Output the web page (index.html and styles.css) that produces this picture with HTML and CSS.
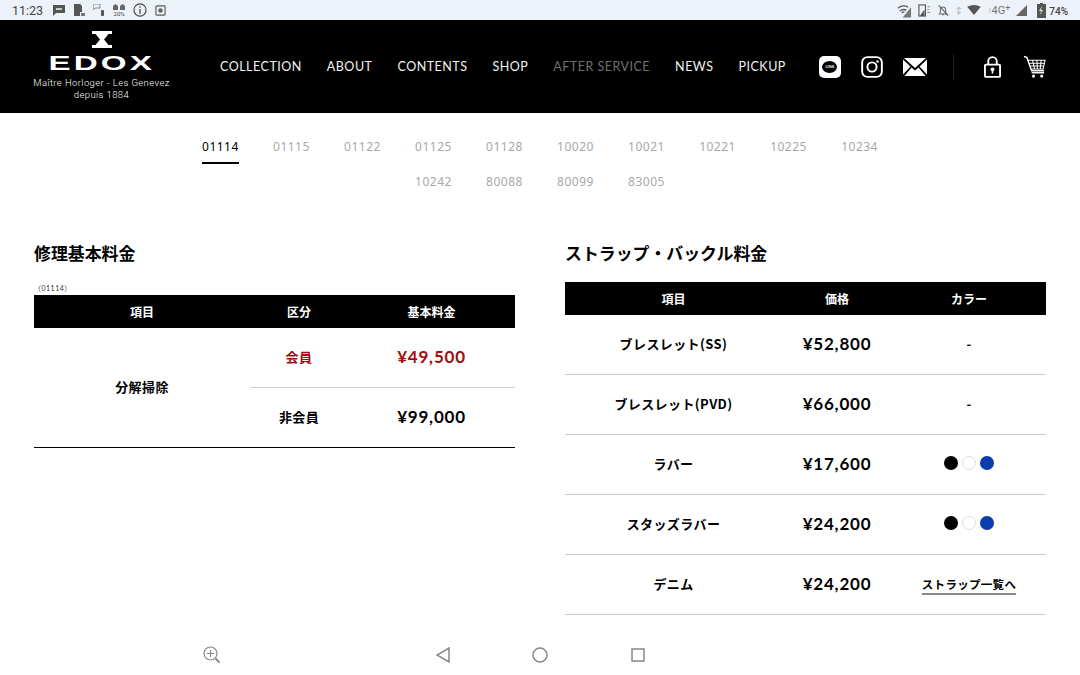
FILE: index.html
```html
<!DOCTYPE html>
<html lang="ja">
<head>
    <meta charset="UTF-8">
    <meta name="viewport" content="width=device-width, initial-scale=1.0">
    <title>EDOX - アフターサービス</title>
    <link rel="stylesheet" href="styles.css">
</head>
<body>

<!-- Android status bar -->
<div class="status-bar">
    <div class="status-left">
        <span class="clock">11:23</span>
        <svg width="12" height="12" viewBox="0 0 12 12"><path d="M0 1h12v8H3l-3 3z" fill="#555"/><rect x="3" y="4" width="6" height="2" fill="#ccc"/></svg>
        <svg width="12" height="13" viewBox="0 0 12 13"><path d="M1 0h6l2 2v6H7v4H1z" fill="#555"/><rect x="8" y="9" width="4" height="3" fill="#777"/></svg>
        <svg width="12" height="12" viewBox="0 0 12 12"><path d="M0 0h7v4H2L0 6z" fill="none" stroke="#888"/><rect x="8" y="6" width="3" height="6" rx="1" fill="#555"/></svg>
        <span class="st-data">
            <svg width="12" height="6" viewBox="0 0 12 6"><path d="M0 6V2l2.500-2L5 2v4zM7 6V2l2.500-2L12 2v4z" fill="#666"/></svg>
            <span>20%</span>
        </span>
        <svg width="14" height="14" viewBox="0 0 15 15"><circle cx="7.500" cy="7.500" r="6.500" fill="none" stroke="#444" stroke-width="1.200"/><rect x="6.800" y="6.500" width="1.400" height="5" fill="#444"/><rect x="6.800" y="3.600" width="1.400" height="1.500" fill="#444"/></svg>
        <svg width="11" height="11" viewBox="0 0 12 12"><rect x="1" y="1" width="10" height="10" rx="1" fill="none" stroke="#555" stroke-width="1.200"/><circle cx="6" cy="6" r="2.500" fill="#666"/></svg>
    </div>
    <div class="status-right">
        <svg width="15" height="15" viewBox="0 0 16 15"><path d="M1 5a10 10 0 0 1 11-1M3 8a7 7 0 0 1 7-1M5 10a4 4 0 0 1 3-1" fill="none" stroke="#555" stroke-width="1.400"/><path d="M15 4v11H6z" fill="#777"/></svg>
        <svg width="13" height="13" viewBox="0 0 14 14"><rect x="1" y="1" width="7" height="12" fill="none" stroke="#555" stroke-width="1.200"/><path d="M7 1v5L2 13h5z" fill="#555"/><path d="M10 3h3M10 6h2M10 9h3" stroke="#888"/></svg>
        <svg width="12" height="13" viewBox="0 0 14 14"><path d="M3 11c1-1 1-3 1-5a3 3 0 0 1 6 0c0 2 0 4 1 5z M6 12h2" fill="none" stroke="#666" stroke-width="1.200"/><path d="M2 1l11 12" stroke="#555" stroke-width="1.200"/></svg>
        <span class="st-arrows">↕</span>
        <svg width="14" height="10" viewBox="0 0 15 11"><path d="M0 2Q7.500-2 15 2L7.500 11z" fill="#555"/></svg>
        <span class="st-net"><span class="st-arrows">↕</span>4G<sup>+</sup></span>
        <svg width="11" height="11" viewBox="0 0 11 11"><path d="M11 0v11H0z" fill="#666"/></svg>
        <span class="st-battery">
            <svg width="9" height="15" viewBox="0 0 9 15"><path d="M3 0h3v1h3v14H0V1h3z" fill="#555"/><path d="M5 3L2 8h2l-1 4 3-5H4z" fill="#ddd"/></svg>
            <b>74%</b>
        </span>
    </div>
</div>

<!-- Header -->
<header class="site-header">
    <a class="logo" href="#">
        <svg class="logo-mark" width="20" height="17" viewBox="0 0 20 17"><path d="M0 0h20v3h-3.500L12 8.500 16.500 14H20v3H0v-3h3.500L8 8.500 3.500 3H0z" fill="#fff"/></svg>
        <span class="logo-name">EDOX</span>
        <span class="logo-sub">Maître Horloger - Les Genevez</span>
        <span class="logo-sub">depuis 1884</span>
    </a>
    <nav class="main-nav">
        <a href="#">COLLECTION</a>
        <a href="#">ABOUT</a>
        <a href="#">CONTENTS</a>
        <a href="#">SHOP</a>
        <a href="#" class="current">AFTER SERVICE</a>
        <a href="#">NEWS</a>
        <a href="#">PICKUP</a>
    </nav>
    <div class="sns-icons">
        <a href="#" class="line-icon"><span class="line-bubble">LINE</span></a>
        <a href="#"><svg width="22" height="22" viewBox="0 0 23 23"><rect x="1.200" y="1.200" width="20.600" height="20.600" rx="5.500" fill="none" stroke="#fff" stroke-width="2"/><circle cx="11.500" cy="11.500" r="4.800" fill="none" stroke="#fff" stroke-width="2"/><circle cx="17.300" cy="5.700" r="1.300" fill="#fff"/></svg></a>
        <a href="#"><svg width="24" height="18" viewBox="0 0 24 18"><path d="M0 1.500v15L7.500 8.500zM24 1.500v15L16.500 8.500z" fill="#fff"/><path d="M1 0h22L12 10zM1.500 18l7-8.500 3.500 3 3.500-3 7 8.500z" fill="#fff"/></svg></a>
    </div>
    <div class="user-icons">
        <a href="#"><svg width="17" height="22" viewBox="0 0 18 23"><path d="M4.500 9V5.500a4.500 4.500 0 0 1 9 0V9" fill="none" stroke="#fff" stroke-width="2"/><rect x="1" y="9" width="16" height="13" rx="1" fill="none" stroke="#fff" stroke-width="2"/><circle cx="9" cy="14" r="2" fill="#fff"/><rect x="8.200" y="14" width="1.600" height="4.500" fill="#fff"/></svg></a>
        <a href="#"><svg width="23" height="24" viewBox="0 0 24 24"><path d="M1 1l3 1 5 14h13" fill="none" stroke="#fff" stroke-width="1.500"/><path d="M5.500 5H23l-2 9H9M6.500 8h16M8 11h14M10 5l2 9M14.500 5l.5 9M19 5l-1 9" fill="none" stroke="#fff" stroke-width="1.100"/><path d="M9 18h13" stroke="#fff" stroke-width="1.500"/><circle cx="11" cy="21.500" r="1.600" fill="#fff"/><circle cx="19.500" cy="21.500" r="1.600" fill="#fff"/></svg></a>
    </div>
</header>

<main class="content">
    <div class="model-tabs">
        <a href="#" class="active">01114</a>
        <a href="#">01115</a>
        <a href="#">01122</a>
        <a href="#">01125</a>
        <a href="#">01128</a>
        <a href="#">10020</a>
        <a href="#">10021</a>
        <a href="#">10221</a>
        <a href="#">10225</a>
        <a href="#">10234</a>
        <a href="#">10242</a>
        <a href="#">80088</a>
        <a href="#">80099</a>
        <a href="#">83005</a>
    </div>

    <div class="price-columns">
        <!-- 修理基本料金 -->
        <section class="price-col">
            <h2>修理基本料金</h2>
            <p class="model-note">（01114）</p>
            <table class="price-table basic">
                <thead>
                    <tr><th>項目</th><th>区分</th><th>基本料金</th></tr>
                </thead>
                <tbody>
                    <tr class="member">
                        <td rowspan="2" class="item-name">分解掃除</td>
                        <td class="kubun">会員</td>
                        <td class="price">¥49,500</td>
                    </tr>
                    <tr>
                        <td class="kubun">非会員</td>
                        <td class="price">¥99,000</td>
                    </tr>
                </tbody>
            </table>
        </section>

        <!-- ストラップ・バックル料金 -->
        <section class="price-col">
            <h2>ストラップ・バックル料金</h2>
            <table class="price-table strap">
                <thead>
                    <tr><th>項目</th><th>価格</th><th>カラー</th></tr>
                </thead>
                <tbody>
                    <tr><td class="item-name">ブレスレット(SS)</td><td class="price">¥52,800</td><td>-</td></tr>
                    <tr><td class="item-name">ブレスレット(PVD)</td><td class="price">¥66,000</td><td>-</td></tr>
                    <tr>
                        <td class="item-name">ラバー</td>
                        <td class="price">¥17,600</td>
                        <td><div class="colors"><i class="dot black"></i><i class="dot white"></i><i class="dot blue"></i></div></td>
                    </tr>
                    <tr>
                        <td class="item-name">スタッズラバー</td>
                        <td class="price">¥24,200</td>
                        <td><div class="colors"><i class="dot black"></i><i class="dot white"></i><i class="dot blue"></i></div></td>
                    </tr>
                    <tr>
                        <td class="item-name">デニム</td>
                        <td class="price">¥24,200</td>
                        <td><a href="#" class="strap-link">ストラップ一覧へ</a></td>
                    </tr>
                </tbody>
            </table>
        </section>
    </div>
</main>

<!-- Android navigation bar -->
<div class="nav-bar">
    <svg class="zoom-icon" width="18" height="18" viewBox="0 0 18 18"><circle cx="7.500" cy="7.500" r="6.500" fill="none" stroke="#888" stroke-width="1.200"/><path d="M7.500 4v7M4 7.500h7" stroke="#888" stroke-width="1"/><path d="M12.500 12.500l4 4" stroke="#888" stroke-width="2"/></svg>
    <div class="nav-buttons">
        <svg width="14" height="16" viewBox="0 0 14 16"><path d="M13 1v14L1 8z" fill="none" stroke="#888" stroke-width="1.500"/></svg>
        <svg width="16" height="16" viewBox="0 0 16 16"><circle cx="8" cy="8" r="7" fill="none" stroke="#888" stroke-width="1.500"/></svg>
        <svg class="nav-square" width="14" height="14" viewBox="0 0 14 14"><rect x="1" y="1" width="12" height="12" fill="none" stroke="#888" stroke-width="1.500"/></svg>
    </div>
</div>

</body>
</html>
```

FILE: styles.css
```css
* {
    margin: 0;
    padding: 0;
    box-sizing: border-box;
}

body {
    font-family: 'Lato', 'Noto Sans CJK JP', sans-serif;
    width: 1080px;
    height: 675px;
    background: #fff;
    color: #000;
    display: flex;
    flex-direction: column;
    overflow: hidden;
}

a {
    color: inherit;
    text-decoration: none;
}

/* status bar */
.status-bar {
    height: 20px;
    flex: none;
    background: #edf2fa;
    display: flex;
    justify-content: space-between;
    align-items: center;
    padding: 0 12px;
    color: #444;
}

.status-left, .status-right {
    display: flex;
    align-items: center;
}

.clock {
    font-family: 'Roboto', sans-serif;
    font-size: 12.500px;
    margin-right: 2px;
}

.status-left {
    gap: 8px;
}

.status-right {
    gap: 6px;
}

.st-data {
    display: flex;
    flex-direction: column;
    align-items: center;
    font-size: 6px;
    line-height: 7px;
    font-family: 'Roboto', sans-serif;
}

.st-arrows {
    font-size: 8px;
    color: #aaa;
}

.st-net {
    font-family: 'Roboto', sans-serif;
    font-size: 11px;
    color: #777;
    display: flex;
    align-items: center;
}

.st-net sup {
    font-size: 9px;
    line-height: 9px;
    align-self: flex-start;
}

.st-battery {
    display: flex;
    align-items: center;
    gap: 3px;
    margin-left: 4px;
}

.st-battery b {
    font-family: 'Roboto', sans-serif;
    font-size: 10px;
    font-weight: 500;
    margin-top: 2px;
}

/* header */
.site-header {
    height: 93px;
    flex: none;
    background: #000;
    color: #fff;
    display: flex;
    align-items: center;
    padding: 0 34px 0 33px;
    white-space: nowrap;
}

.logo {
    width: 137px;
    flex: none;
    display: flex;
    flex-direction: column;
    align-items: center;
    margin-right: 50px;
    padding-bottom: 2px;
}

.logo-mark {
    margin-bottom: 5px;
}

.logo-name {
    font-family: 'Liberation Sans', sans-serif;
    font-weight: 700;
    font-size: 21px;
    line-height: 19px;
    letter-spacing: 2px;
    transform: scaleX(1.58);
    margin-bottom: 5px;
}

.logo-sub {
    font-family: 'Roboto', sans-serif;
    font-size: 9.500px;
    font-weight: 300;
    line-height: 12px;
    letter-spacing: 0.4px;
    color: #fff;
}

.main-nav {
    display: flex;
    gap: 25px;
    font-size: 12.500px;
    letter-spacing: 0.5px;
    margin-right: 33px;
    color: #f2f2f2;
}

.main-nav .current {
    color: #707070;
}

.sns-icons {
    display: flex;
    align-items: center;
    gap: 20px;
    padding-right: 26px;
    border-right: 1px solid #222;
    height: 26px;
}

.sns-icons a {
    display: flex;
}

.line-icon {
    width: 22px;
    height: 22px;
    background: #fff;
    border-radius: 5px;
    align-items: center;
    justify-content: center;
}

.line-bubble {
    background: #000;
    color: #fff;
    width: 15px;
    height: 12px;
    border-radius: 50%;
    font-size: 4px;
    font-weight: 700;
    line-height: 12px;
    text-align: center;
}

.user-icons {
    display: flex;
    align-items: center;
    gap: 22px;
    margin-left: 30px;
}

.user-icons a {
    display: flex;
}

/* tabs */
.content {
    flex: 1;
    min-height: 0;
    padding: 0 34px;
}

.model-tabs {
    width: 720px;
    margin: 16px auto 0;
    display: flex;
    flex-wrap: wrap;
    justify-content: center;
    column-gap: 34.200px;
    font-family: 'Noto Sans', sans-serif;
    font-size: 12px;
    letter-spacing: 0.5px;
    color: #a8a8a8;
}

.model-tabs a {
    height: 35px;
    line-height: 35px;
}

.model-tabs .active {
    color: #000;
    border-bottom: 2px solid #000;
}

/* tables */
.price-columns {
    display: grid;
    grid-template-columns: 481px 481px;
    column-gap: 50px;
    margin-top: 43px;
}

h2 {
    font-size: 16.900px;
    font-weight: 700;
    line-height: 24px;
    margin-bottom: 16px;
}

.model-note {
    font-size: 7px;
    line-height: 13px;
    letter-spacing: 0.5px;
    color: #333;
}

.price-table {
    width: 100%;
    border-collapse: separate;
    border-spacing: 0;
    table-layout: fixed;
    text-align: center;
}

.price-table th {
    background: #000;
    color: #fff;
    height: 33px;
    font-size: 12px;
    font-weight: 700;
}

.price-table td {
    height: 60px;
    padding-bottom: 2px;
    font-family: 'Noto Sans CJK JP', sans-serif;
    font-size: 13px;
    font-weight: 700;
    letter-spacing: 0.4px;
    border-bottom: 1px solid #ccc;
}

.price-table .price {
    font-family: 'Lato', sans-serif;
    font-size: 17px;
    letter-spacing: 0.8px;
}

.basic th:nth-child(1) {
    width: 216px;
}

.basic th:nth-child(2) {
    width: 98px;
}

.basic .item-name {
    border-bottom: 1px solid #000;
}

.basic tr:last-child td {
    border-bottom: 1px solid #000;
}

.member td:not(.item-name) {
    color: #a00d10;
}

.strap th:nth-child(1) {
    width: 217px;
}

.strap th:nth-child(2) {
    width: 110px;
}

.colors {
    display: flex;
    justify-content: center;
    gap: 4px;
    margin-top: -2px;
}

.dot {
    width: 14px;
    height: 14px;
    border-radius: 50%;
}

.dot.black {
    background: #000;
}

.dot.white {
    background: #fff;
    border: 1px solid #ddd;
}

.dot.blue {
    background: #0d3cae;
}

.strap-link {
    font-size: 11.500px;
    letter-spacing: 0.3px;
    padding-bottom: 1px;
    border-bottom: 2px solid #888;
}

/* navigation bar */
.nav-bar {
    height: 40px;
    flex: none;
    background: #fff;
    display: flex;
    align-items: center;
    justify-content: center;
    position: relative;
}

.zoom-icon {
    position: absolute;
    left: 203px;
    top: 11px;
}

.nav-buttons {
    display: flex;
    align-items: center;
    gap: 82px;
}

.nav-square {
    margin: 0 -1px 0 1px;
}
```
